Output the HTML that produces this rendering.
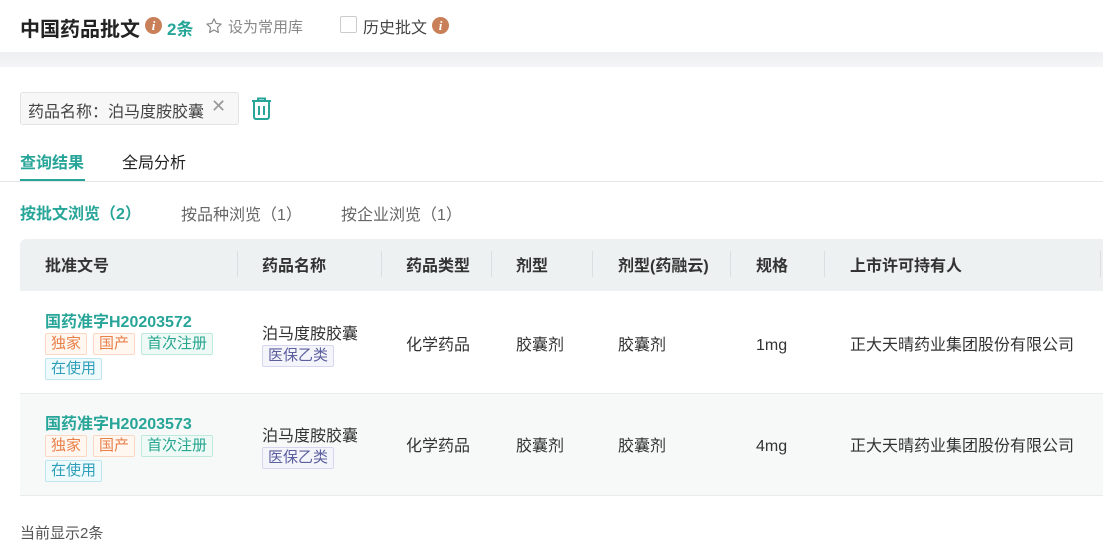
<!DOCTYPE html><html><head><meta charset="utf-8"><style>
*{box-sizing:border-box;margin:0;padding:0}
body{width:1103px;height:560px;overflow:hidden;background:#fff;font-family:"Liberation Sans","Noto Sans CJK SC",sans-serif;color:#333;position:relative}
.a{position:absolute;white-space:nowrap}
.info{position:absolute;width:17px;height:17px;border-radius:50%;background:#c98058;color:#fff;font-size:13px;font-weight:bold;text-align:center;line-height:17px;font-style:italic;font-family:"Liberation Serif",serif}
.tag{position:absolute;height:22px;font-size:15px;line-height:20px;padding:0 5px;border:1px solid;border-radius:2px;white-space:nowrap}
.o{color:#e8804a;background:#fff7f0;border-color:#fbd8c4}
.g{color:#26a58f;background:#effaf7;border-color:#bfe9de}
.c{color:#2f9fb9;background:#effafd;border-color:#bfe6ef}
.p{color:#5b5f9e;background:#f4f4fb;border-color:#d6d7ee}
.th{font-size:16px;font-weight:bold;color:#333;top:252px}
.sep{position:absolute;top:251px;width:1px;height:26px;background:#dcdfe2}
.td{font-size:16px;color:#333}
.no{font-size:16px;font-weight:bold;color:#27a598}
</style></head><body>
<div class="a" style="left:20px;top:13px;font-size:20px;font-weight:bold;color:#222">中国药品批文</div>
<div class="info" style="left:145px;top:17px">i</div>
<div class="a" style="left:167px;top:15px;font-size:17px;font-weight:bold;color:#27a598">2条</div>
<svg class="a" style="left:205px;top:17px" width="18" height="18" viewBox="0 0 24 24"><path d="M12 2.5l2.9 6.1 6.6.8-4.9 4.6 1.3 6.6L12 17.3l-5.9 3.3 1.3-6.6-4.9-4.6 6.6-.8z" fill="none" stroke="#888" stroke-width="1.6" stroke-linejoin="round"/></svg>
<div class="a" style="left:228px;top:16px;font-size:15px;color:#888">设为常用库</div>
<div class="a" style="left:340px;top:16px;width:17px;height:17px;border:1px solid #ccc;border-radius:2px"></div>
<div class="a" style="left:363px;top:14px;font-size:16px;color:#444">历史批文</div>
<div class="info" style="left:432px;top:17px">i</div>
<div class="a" style="left:0;top:52px;width:1103px;height:15px;background:linear-gradient(#eeeff1,#f4f5f6)"></div>
<div class="a" style="left:20px;top:92px;width:219px;height:33px;border:1px solid #e3e3e3;border-radius:3px;background:#f7f7f7"></div>
<div class="a" style="left:28px;top:98px;font-size:16px;color:#444">药品名称：泊马度胺胶囊</div>
<div class="a" style="left:211px;top:96px;font-size:18px;color:#999">✕</div>
<svg class="a" style="left:251px;top:97px" width="21" height="23" viewBox="0 0 21 23"><path d="M1 4h19M7 4V1.5h7V4M3 4v16a2 2 0 0 0 2 2h11a2 2 0 0 0 2-2V4M8 9v9M13 9v9" fill="none" stroke="#27a598" stroke-width="2"/></svg>
<div class="a" style="left:20px;top:149px;font-size:16px;font-weight:bold;color:#27a598">查询结果</div>
<div class="a" style="left:20px;top:179px;width:65px;height:3px;background:#27a598"></div>
<div class="a" style="left:122px;top:149px;font-size:16px;color:#222">全局分析</div>
<div class="a" style="left:0;top:181px;width:1103px;height:1px;background:#e6e6e6"></div>
<div class="a" style="left:20px;top:200px;font-size:16px;font-weight:bold;color:#27a598">按批文浏览（2）</div>
<div class="a" style="left:181px;top:201px;font-size:16px;color:#666">按品种浏览（1）</div>
<div class="a" style="left:341px;top:201px;font-size:16px;color:#666">按企业浏览（1）</div>
<div class="a" style="left:20px;top:239px;width:1090px;height:52px;background:#eef1f2;border-radius:6px 6px 0 0"></div>
<div class="a th" style="left:45px">批准文号</div><div class="sep" style="left:237px"></div>
<div class="a th" style="left:262px">药品名称</div><div class="sep" style="left:381px"></div>
<div class="a th" style="left:406px">药品类型</div><div class="sep" style="left:491px"></div>
<div class="a th" style="left:516px">剂型</div><div class="sep" style="left:592px"></div>
<div class="a th" style="left:618px">剂型(药融云)</div><div class="sep" style="left:730px"></div>
<div class="a th" style="left:756px">规格</div><div class="sep" style="left:824px"></div>
<div class="a th" style="left:850px">上市许可持有人</div><div class="sep" style="left:1100px"></div>
<div class="a" style="left:20px;top:393px;width:1090px;height:1px;background:#ebebeb"></div>
<div class="a" style="left:20px;top:394px;width:1090px;height:101px;background:#f7f8f8"></div>
<div class="a" style="left:20px;top:495px;width:1090px;height:1px;background:#ebebeb"></div>

<div class="a no" style="left:45px;top:308px">国药准字H20203572</div>
<div class="tag o" style="left:45px;top:333px">独家</div>
<div class="tag o" style="left:93px;top:333px">国产</div>
<div class="tag g" style="left:141px;top:333px">首次注册</div>
<div class="tag c" style="left:45px;top:358px">在使用</div>
<div class="a td" style="left:262px;top:320px">泊马度胺胶囊</div>
<div class="tag p" style="left:262px;top:345px">医保乙类</div>
<div class="a td" style="left:406px;top:331px">化学药品</div>
<div class="a td" style="left:516px;top:331px">胶囊剂</div>
<div class="a td" style="left:618px;top:331px">胶囊剂</div>
<div class="a td" style="left:756px;top:337px">1mg</div>
<div class="a td" style="left:850px;top:331px">正大天晴药业集团股份有限公司</div>

<div class="a no" style="left:45px;top:410px">国药准字H20203573</div>
<div class="tag o" style="left:45px;top:435px">独家</div>
<div class="tag o" style="left:93px;top:435px">国产</div>
<div class="tag g" style="left:141px;top:435px">首次注册</div>
<div class="tag c" style="left:45px;top:460px">在使用</div>
<div class="a td" style="left:262px;top:422px">泊马度胺胶囊</div>
<div class="tag p" style="left:262px;top:447px">医保乙类</div>
<div class="a td" style="left:406px;top:432px">化学药品</div>
<div class="a td" style="left:516px;top:432px">胶囊剂</div>
<div class="a td" style="left:618px;top:432px">胶囊剂</div>
<div class="a td" style="left:756px;top:438px">4mg</div>
<div class="a td" style="left:850px;top:432px">正大天晴药业集团股份有限公司</div>

<div class="a" style="left:20px;top:522px;font-size:15px;color:#555">当前显示2条</div>
</body></html>
